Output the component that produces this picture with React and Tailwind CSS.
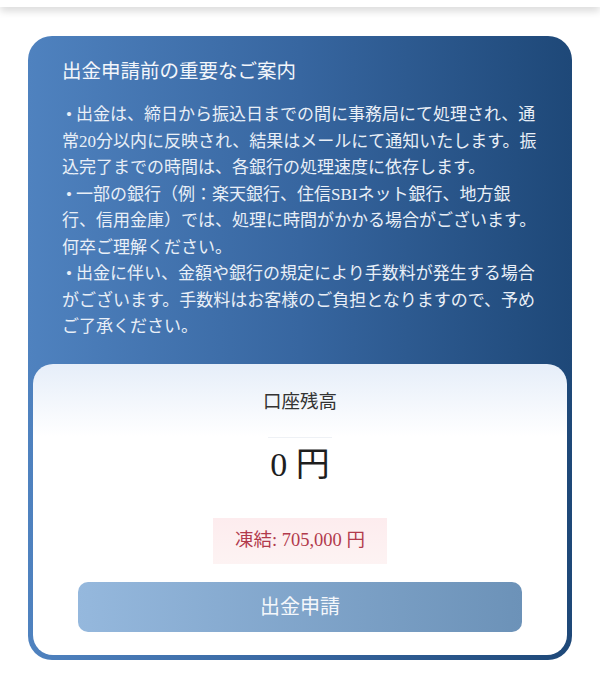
import React from 'react'

const serif = { fontFamily: '"Liberation Serif", "Noto Sans CJK JP", serif' }

function Bullet() {
  return <span className="inline-block w-[14px] text-center">•</span>
}

function Notice() {
  return (
    <div className="px-[34px] pt-[22px] pb-[23px] text-white">
      <h2 className="text-[19.5px] leading-[28px] text-[#f3f6fb]">出金申請前の重要なご案内</h2>
      <p className="mt-[16px] text-[17px] leading-[26.5px] text-[#e9eff7] whitespace-nowrap">
        <Bullet />出金は、締日から振込日までの間に事務局にて処理され、通<br />
        常20分以内に反映され、結果はメールにて通知いたします。振<br />
        込完了までの時間は、各銀行の処理速度に依存します。<br />
        <Bullet />一部の銀行（例：楽天銀行、住信SBIネット銀行、地方銀<br />
        行、信用金庫）では、処理に時間がかかる場合がございます。<br />
        何卒ご理解ください。<br />
        <Bullet />出金に伴い、金額や銀行の規定により手数料が発生する場合<br />
        がございます。手数料はお客様のご負担となりますので、予め<br />
        ご了承ください。
      </p>
    </div>
  )
}

function Balance() {
  return (
    <div className="mx-[5px] mb-[5px] rounded-[20px] bg-gradient-to-b from-[#e6eef9] via-white via-25% to-white pt-[25px] pb-[23px] flex flex-col items-center">
      <div className="text-[18.5px] leading-[26px] text-[#333]">口座残高</div>
      <div className="mt-[22px] h-px w-16 bg-[#eef1f5]" />
      <div className="mt-[7px] text-[34px] leading-[40px] text-[#1e1e1e]">0 円</div>
      <div className="mt-[33px] h-[46px] px-[22px] flex items-center bg-gradient-to-b from-[#fdecee] to-[#fdf3f3] text-[18.5px] text-[#b23a4c]">
        凍結: 705,000 円
      </div>
      <button
        type="button"
        className="mt-[18px] h-[50px] w-[444px] rounded-[10px] bg-gradient-to-r from-[#95b8dd] to-[#6c92b8] text-[20px] text-[#f4f7fb]"
        style={serif}
      >
        出金申請
      </button>
    </div>
  )
}

export default function App() {
  return (
    <div className="min-h-[684px] bg-white" style={serif}>
      <div className="h-[7px] bg-white shadow-[0_3px_9px_rgba(0,0,0,0.2)]" />
      <div className="px-[28px] pt-[29px] pb-6">
        <div className="rounded-[24px] bg-gradient-to-r from-[#4f82bf] via-[#3766a0] to-[#1e4878] overflow-hidden">
          <Notice />
          <Balance />
        </div>
      </div>
    </div>
  )
}
